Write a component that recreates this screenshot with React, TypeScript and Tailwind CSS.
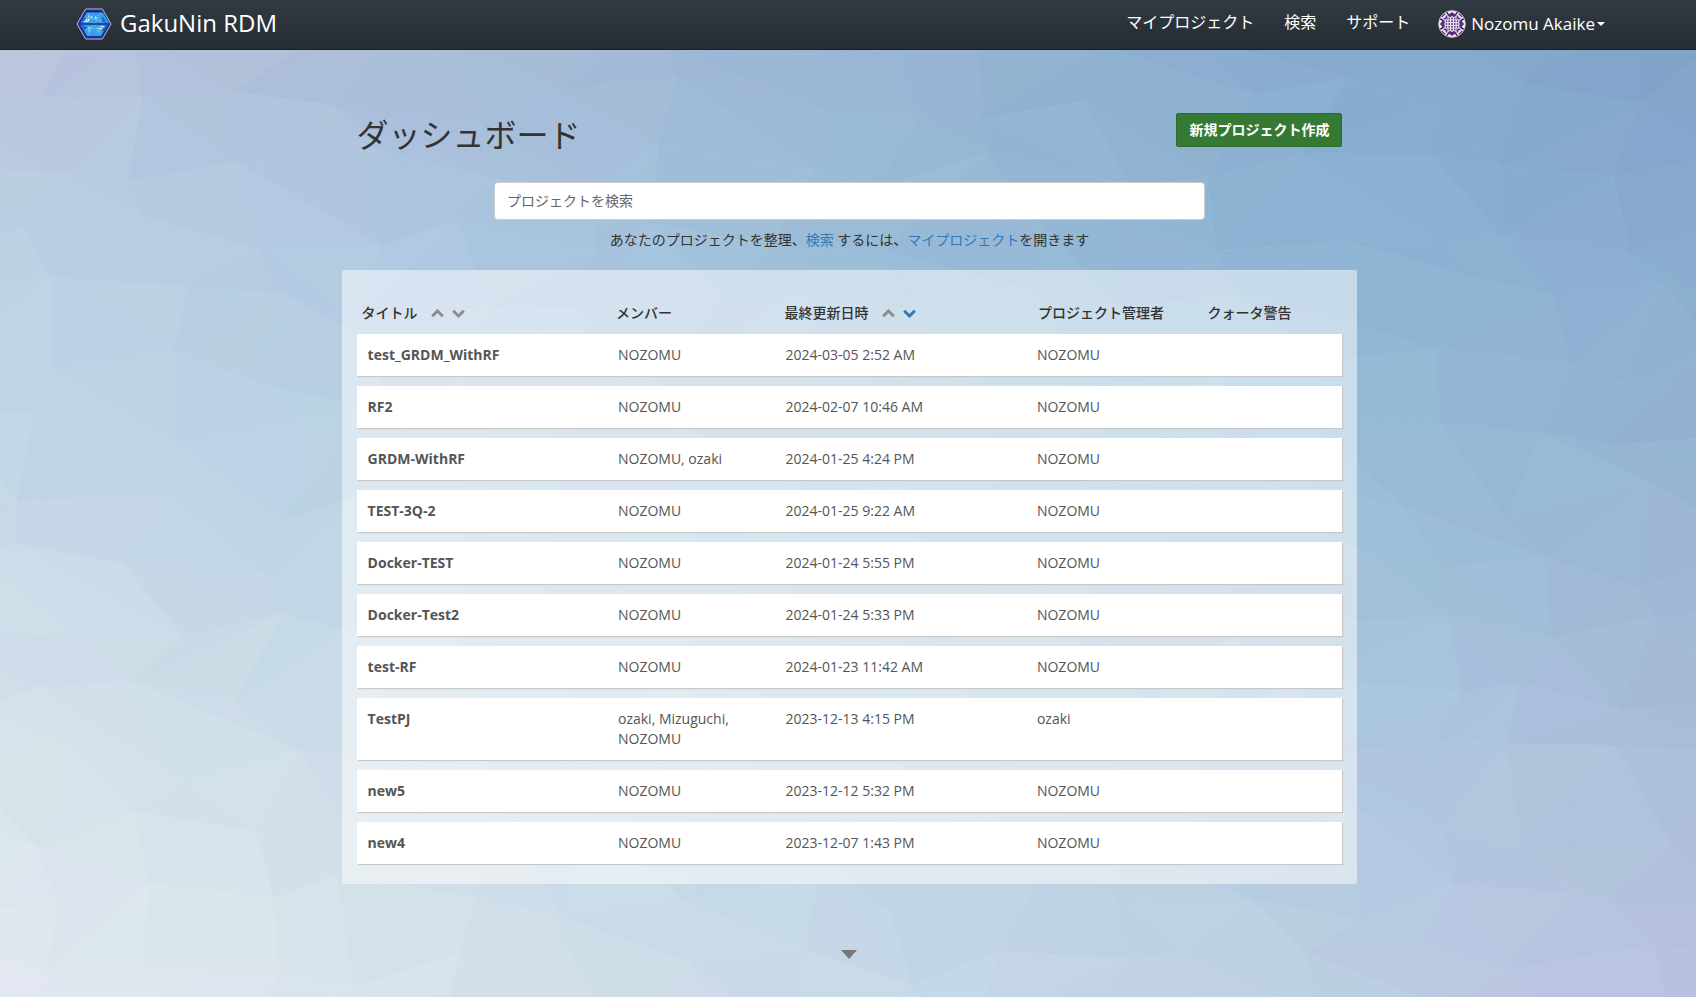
import React from "react";

type Rgb = [number, number, number];

type Project = {
  title: string;
  members: string;
  updated: string;
  admin: string;
};

const PROJECTS: Project[] = [
  { title: "test_GRDM_WithRF", members: "NOZOMU", updated: "2024-03-05 2:52 AM", admin: "NOZOMU" },
  { title: "RF2", members: "NOZOMU", updated: "2024-02-07 10:46 AM", admin: "NOZOMU" },
  { title: "GRDM-WithRF", members: "NOZOMU, ozaki", updated: "2024-01-25 4:24 PM", admin: "NOZOMU" },
  { title: "TEST-3Q-2", members: "NOZOMU", updated: "2024-01-25 9:22 AM", admin: "NOZOMU" },
  { title: "Docker-TEST", members: "NOZOMU", updated: "2024-01-24 5:55 PM", admin: "NOZOMU" },
  { title: "Docker-Test2", members: "NOZOMU", updated: "2024-01-24 5:33 PM", admin: "NOZOMU" },
  { title: "test-RF", members: "NOZOMU", updated: "2024-01-23 11:42 AM", admin: "NOZOMU" },
  { title: "TestPJ", members: "ozaki, Mizuguchi, NOZOMU", updated: "2023-12-13 4:15 PM", admin: "ozaki" },
  { title: "new5", members: "NOZOMU", updated: "2023-12-12 5:32 PM", admin: "NOZOMU" },
  { title: "new4", members: "NOZOMU", updated: "2023-12-07 1:43 PM", admin: "NOZOMU" },
];

/* Low-poly backdrop: a jittered triangle mesh tinted from a coarse colour grid. */
const GRID_X = [0, 0.2, 0.5, 0.8, 1];
const GRID_Y = [0, 0.25, 0.5, 0.75, 1];
const GRID: Rgb[][] = [
  [[184, 194, 218], [172, 187, 215], [154, 180, 211], [132, 168, 204], [128, 161, 199]],
  [[188, 207, 229], [178, 202, 226], [155, 189, 216], [140, 179, 211], [138, 173, 208]],
  [[198, 217, 231], [187, 210, 228], [171, 202, 223], [155, 189, 216], [152, 180, 210]],
  [[214, 227, 234], [204, 221, 232], [188, 212, 228], [174, 200, 223], [171, 189, 216]],
  [[227, 233, 241], [218, 228, 236], [200, 217, 232], [189, 206, 227], [185, 194, 222]],
];

function locate(stops: number[], value: number): [number, number] {
  const v = Math.min(1, Math.max(0, value));
  let i = 0;
  while (i < stops.length - 2 && v > stops[i + 1]) i++;
  return [i, (v - stops[i]) / (stops[i + 1] - stops[i])];
}

function sample(x: number, y: number): Rgb {
  const [i, fx] = locate(GRID_X, x);
  const [j, fy] = locate(GRID_Y, y);
  return [0, 1, 2].map((c) => {
    const top = GRID[j][i][c] * (1 - fx) + GRID[j][i + 1][c] * fx;
    const bottom = GRID[j + 1][i][c] * (1 - fx) + GRID[j + 1][i + 1][c] * fx;
    return top * (1 - fy) + bottom * fy;
  }) as Rgb;
}

function buildMesh() {
  let seed = 29;
  const random = () => {
    seed = (seed * 16807) % 2147483647;
    return seed / 2147483647;
  };
  const cols = 16;
  const rows = 15;
  const points: [number, number][][] = [];
  for (let r = 0; r <= rows + 1; r++) {
    const line: [number, number][] = [];
    for (let c = 0; c <= cols + 1; c++) {
      const x = ((c - 0.5 + (random() - 0.5) * 0.7) / cols) * 1000;
      const y = ((r - 0.5 + (random() - 0.5) * 0.7) / rows) * 1000;
      line.push([x, y]);
    }
    points.push(line);
  }
  const triangles: { d: string; fill: string }[] = [];
  const add = (a: [number, number], b: [number, number], c: [number, number]) => {
    const base = sample((a[0] + b[0] + c[0]) / 3000, (a[1] + b[1] + c[1]) / 3000);
    const shade = (random() - 0.5) * 2;
    const hue = (random() - 0.5) * 3;
    const rgb = [base[0] + shade, base[1] + shade + hue, base[2] + shade - hue / 2].map(Math.round);
    triangles.push({
      d: [a, b, c].map((p) => p.map((n) => n.toFixed(1)).join(",")).join(" "),
      fill: `rgb(${rgb.join(",")})`,
    });
  };
  for (let r = 0; r <= rows; r++) {
    for (let c = 0; c <= cols; c++) {
      const a = points[r][c];
      const b = points[r][c + 1];
      const d = points[r + 1][c];
      const e = points[r + 1][c + 1];
      if (random() > 0.4) {
        add(a, b, e);
        add(a, e, d);
      } else {
        add(a, b, d);
        add(b, e, d);
      }
    }
  }
  return triangles;
}

const MESH = buildMesh();

function Backdrop() {
  return (
    <svg
      className="absolute inset-0 -z-10 h-full w-full"
      viewBox="0 0 1000 1000"
      preserveAspectRatio="none"
      aria-hidden="true"
    >
      {MESH.map((t, i) => (
        <polygon key={i} points={t.d} fill={t.fill} stroke={t.fill} strokeWidth="0.6" />
      ))}
    </svg>
  );
}

function Logo() {
  return (
    <svg className="h-8 w-9" viewBox="0 0 36 32" aria-hidden="true">
      <path d="M9.6 1h16.8L35 16l-8.6 15H9.6L1 16z" fill="#1d2f9c" stroke="#b9bfd6" strokeWidth="1" />
      <path d="M11 4h14l7 12-7 12H11L4 16z" fill="#3aa0e2" />
      <path d="M4 16l7-3-2-5zM32 16l-7-3 2-5zM4 16l7 3-2 5zM32 16l-7 3 2 5z" fill="#2467c8" />
      <path d="M12 7l5 2-5 5zM19 8l6 5-6-1zM12 19l5 1-4 5zM20 19l6 1-4 5zM7 14l4-4 1 4zM29 18l-4 4-1-4z" fill="#cfeaf6" />
      <path d="M14 10l2 1-2 2zM22 10l1 2-2 0zM14 21l2 1-2 1zM22 21l2 0-1 2zM9 12l1 1h-2zM26 19l1 1h-2zM17 13h2v1h-2zM17 18h2v1h-2z" fill="#4a5a6a" />
      <path d="M12 5l12 22M25 4L12 27M9 9l17 4M9 22l16-3" stroke="#45b4f0" strokeWidth="1.4" fill="none" />
      <path d="M4 16h28" stroke="#1a2fa0" strokeWidth="1.6" fill="none" />
      <path d="M11 3.500h14" stroke="#1a2390" strokeWidth="2" />
      <path d="M26 5l6 10" stroke="#2aa7ec" strokeWidth="2" />
    </svg>
  );
}

function Avatar() {
  const arms = [0, 90, 180, 270];
  return (
    <svg className="h-7 w-7" viewBox="0 0 28 28" aria-hidden="true">
      <defs>
        <clipPath id="avatar-clip">
          <circle cx="14" cy="14" r="13.500" />
        </clipPath>
      </defs>
      <g clipPath="url(#avatar-clip)">
        <rect width="28" height="28" fill="#f4f1f6" />
        {arms.map((a) => (
          <g key={a} transform={`rotate(${a} 14 14)`} fill="none" stroke="#562a7c" strokeWidth="1.7">
            <path d="M8.500 2l2.500 3.500L14 3l3 2.500L19.500 2M11.500 6.500L14 5l2.500 1.500" />
            <path d="M3.500 7l3.500-3.500M5.500 8.500h3v-3" />
          </g>
        ))}
        {[8.5, 11.25, 14, 16.75, 19.5].map((x) =>
          [8.5, 11.25, 14, 16.75, 19.5].map((y) => (
            <rect key={`${x}-${y}`} x={x - 0.9} y={y - 0.9} width="1.8" height="1.8" fill="#6b4590" />
          ))
        )}
      </g>
      <circle cx="14" cy="14" r="13.300" fill="none" stroke="#b9b6bf" strokeWidth="0.8" />
    </svg>
  );
}

function Chevron({ up }: { up?: boolean }) {
  return (
    <svg className="h-[9px] w-[13px]" viewBox="0 0 13 9" aria-hidden="true">
      <path
        d={up ? "M1.200 7.200L6.500 2l5.300 5.200" : "M1.200 1.800L6.500 7l5.300-5.200"}
        fill="none"
        stroke="currentColor"
        strokeWidth="3"
      />
    </svg>
  );
}

function SortButtons({ label, active }: { label: string; active?: boolean }) {
  return (
    <span className="ml-[13px] inline-flex gap-2">
      <button type="button" aria-label={`${label} 昇順`} className="text-[#8c8c8c]">
        <Chevron up />
      </button>
      <button
        type="button"
        aria-label={`${label} 降順`}
        className={active ? "text-[#337ab7]" : "text-[#8c8c8c]"}
      >
        <Chevron />
      </button>
    </span>
  );
}

function Navbar() {
  return (
    <nav className="flex h-[50px] items-center justify-between border-b border-[#15202a] bg-linear-to-b from-[#323a42] to-[#252d33] pr-[91px] pb-0.5 pl-[76px] text-white">
      <a href="#home" className="flex items-center gap-2">
        <Logo />
        <span className="pb-0.5 text-2xl leading-7">GakuNin RDM</span>
      </a>
      <div className="flex items-center text-base leading-6">
        <div className="flex gap-[30px] pb-1">
          <a href="#projects">マイプロジェクト</a>
          <a href="#search">検索</a>
          <a href="#support">サポート</a>
        </div>
        <button type="button" className="ml-7 flex items-center">
          <Avatar />
          <span className="ml-[5px] text-[17px]">Nozomu Akaike</span>
          <span className="ml-0.5 border-x-4 border-t-4 border-x-transparent border-t-white" />
        </button>
      </div>
    </nav>
  );
}

function ProjectTable() {
  return (
    <table className="w-full table-fixed border-separate border-spacing-x-0 border-spacing-y-[10px] text-left text-sm text-[#555]">
      <colgroup>
        <col className="w-[25.4%]" />
        <col className="w-[17%]" />
        <col className="w-[25.5%]" />
        <col className="w-[17.3%]" />
        <col className="w-[14.8%]" />
      </colgroup>
      <thead className="text-[#333]">
        <tr className="h-[21px] align-top leading-5">
          <th className="pl-[5px] font-medium">
            タイトル
            <SortButtons label="タイトル" />
          </th>
          <th className="pl-[9px] font-medium">メンバー</th>
          <th className="pl-[10px] font-medium">
            最終更新日時
            <SortButtons label="最終更新日時" active />
          </th>
          <th className="pl-3 font-medium">プロジェクト管理者</th>
          <th className="pl-[11px] font-medium">クォータ警告</th>
        </tr>
      </thead>
      <tbody>
        {PROJECTS.map((p) => (
          <tr key={p.title} className="bg-white align-top leading-5 shadow-[1px_1px_1px_#c8c8c8]">
            <td className="py-[11px] pl-[11px]">
              <a href="#project" className="font-bold">
                {p.title}
              </a>
            </td>
            <td className="py-[11px] pr-8 pl-[11px]">{p.members}</td>
            <td className="py-[11px] pl-[11px]">{p.updated}</td>
            <td className="py-[11px] pl-[11px]">{p.admin}</td>
            <td />
          </tr>
        ))}
      </tbody>
    </table>
  );
}

export default function App() {
  return (
    <div className="relative isolate min-h-screen overflow-hidden font-['Open_Sans','Noto_Sans_CJK_JP',sans-serif] text-sm text-[#333]">
      <Backdrop />
      <Navbar />
      <div className="pl-[3px]">
        <main className="mx-auto w-3/5 pt-[63px]">
          <div className="flex items-start justify-between px-[15px]">
            <h1 className="pt-0.5 text-[32px] leading-10 font-normal">ダッシュボード</h1>
            <button
              type="button"
              className="rounded-xs border border-[#2d6a2d] bg-[#357935] px-3 py-1.5 leading-5 font-bold text-white"
            >
              新規プロジェクト作成
            </button>
          </div>
          <div className="mx-auto mt-[27px] w-[70%]">
            <input
              type="text"
              aria-label="プロジェクトを検索"
              placeholder="プロジェクトを検索"
              className="h-[38px] w-full rounded border border-[#ccc] bg-white px-3 pb-0.5 text-sm placeholder:text-[#666]"
            />
          </div>
          <p className="mt-[10px] text-center leading-5">
            あなたのプロジェクトを整理、
            <a href="#search" className="text-[#337ab7]">検索</a> するには、
            <a href="#projects" className="text-[#337ab7]">マイプロジェクト</a>を開きます
          </p>
          <section className="mt-5 rounded-xs bg-white/50 px-[15px] pt-[23px] pb-[10px]">
            <ProjectTable />
          </section>
          <div className="flex justify-center pt-[66px] pb-9">
            <button
              type="button"
              aria-label="下へスクロール"
              className="border-x-8 border-t-9 border-x-transparent border-t-[#777]"
            />
          </div>
        </main>
      </div>
    </div>
  );
}
